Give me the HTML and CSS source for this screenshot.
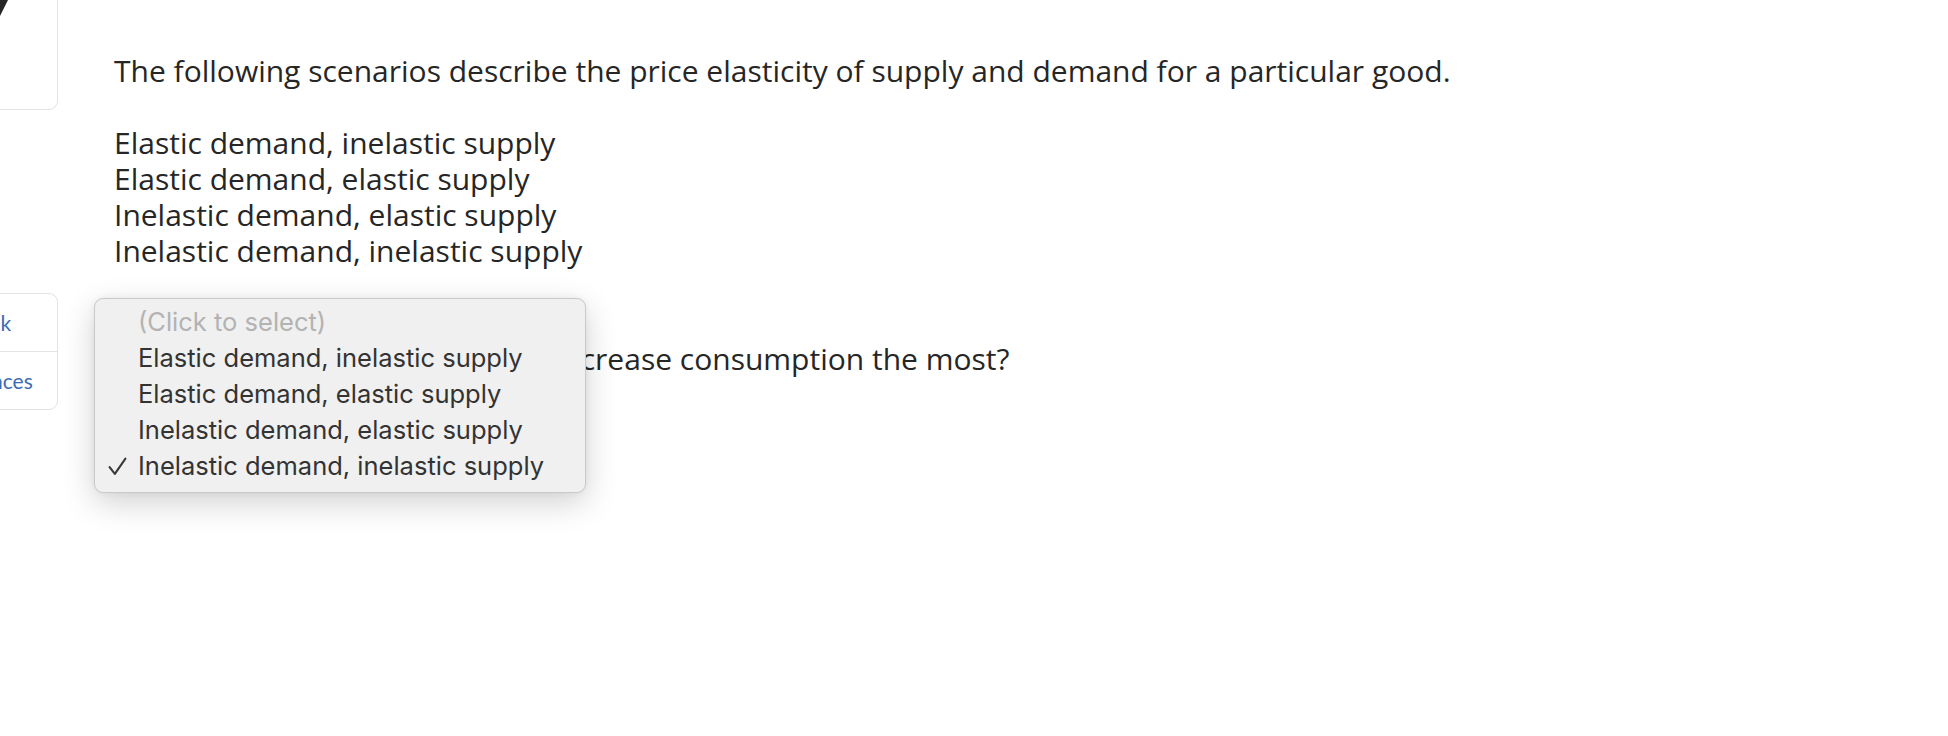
FILE: index.html
```html
<!DOCTYPE html>
<html lang="en">
<head>
<meta charset="utf-8">
<title>Price elasticity question</title>
<link rel="stylesheet" href="styles.css">
</head>
<body>
<div class="page">
  <aside class="sidebar">
    <div class="card card-top">
      <svg class="card-icon" width="60" height="60" viewBox="0 0 60 60"><path d="M2 58 L30 2" stroke="#262626" stroke-width="9" fill="none"/></svg>
    </div>
    <div class="card card-links">
      <a class="link" href="#">Ebook</a>
      <a class="link" href="#">References</a>
    </div>
  </aside>
  <main class="content">
    <p class="line">The following scenarios describe the price elasticity of supply and demand for a particular good.</p>
    <p class="line blank">&nbsp;</p>
    <p class="line">Elastic demand, inelastic supply</p>
    <p class="line">Elastic demand, elastic supply</p>
    <p class="line">Inelastic demand, elastic supply</p>
    <p class="line">Inelastic demand, inelastic supply</p>
    <p class="line blank">&nbsp;</p>
    <p class="line blank">&nbsp;</p>
    <p class="line"><span class="tight">Which of these scenarios would in</span>crease consumption the most?</p>
    <div class="select-row">
      <div class="select-box">Inelastic demand, inelastic supply</div>
      <ul class="popup">
        <li class="opt placeholder">(Click to select)</li>
        <li class="opt">Elastic demand, inelastic supply</li>
        <li class="opt">Elastic demand, elastic supply</li>
        <li class="opt">Inelastic demand, elastic supply</li>
        <li class="opt checked"><svg class="check" width="18" height="18" viewBox="0 0 18 18"><path d="M1.5 9.5 L6.5 16 L16.5 1.5" stroke="#3a3a3a" stroke-width="2" fill="none" stroke-linecap="round" stroke-linejoin="round"/></svg>Inelastic demand, inelastic supply</li>
      </ul>
    </div>
  </main>
</div>
</body>
</html>
```

FILE: styles.css
```css
html, body {
  margin: 0;
  padding: 0;
  background: #ffffff;
}
body {
  width: 1948px;
  height: 736px;
  overflow: hidden;
  font-family: "Open Sans", "Liberation Sans", sans-serif;
  color: #262626;
}
.page {
  display: flex;
  align-items: flex-start;
}
.sidebar {
  width: 58px;
  flex: none;
  display: flex;
  flex-direction: column;
  gap: 183px;
}
.card {
  border: 1px solid #e3e3e3;
  background: #fff;
  margin-left: -94px;
  width: 152px;
  box-sizing: border-box;
  overflow: hidden;
}
.card-top {
  height: 112px;
  margin-top: -2px;
  border-top: none;
  border-radius: 0 0 9px 0;
  position: relative;
}
.card-icon {
  position: absolute;
  left: 82px;
  top: -32px;
}
.card-links {
  border-radius: 0 9px 9px 0;
  display: flex;
  flex-direction: column;
  height: 117px;
}
.link {
  display: flex;
  align-items: center;
  justify-content: center;
  height: 58px;
  font-family: Lato, "Liberation Sans", sans-serif;
  font-size: 21px;
  color: #3b6cb4;
  text-decoration: none;
  white-space: nowrap;
}
.link + .link {
  border-top: 1px solid #e3e3e3;
}
.content {
  padding: 53px 0 0 56px;
  flex: 1;
}
.line {
  margin: 0;
  font-size: 30px;
  line-height: 36px;
  white-space: nowrap;
}
.tight {
  letter-spacing: -0.25px;
}
.select-row {
  position: relative;
  margin-top: 72px;
  height: 36px;
}
.select-box {
  font-size: 26px;
  line-height: 36px;
  color: transparent;
}
.popup {
  position: absolute;
  left: -20px;
  top: -151px;
  width: 492px;
  height: 195px;
  box-sizing: border-box;
  margin: 0;
  padding: 5px 0 0 0;
  list-style: none;
  background: #f0f0f0;
  border: 1px solid #c9c9c9;
  border-radius: 9px;
  box-shadow: 0 10px 32px rgba(0, 0, 0, 0.18), 0 0 6px rgba(0, 0, 0, 0.06);
  font-family: Inter, "Liberation Sans", sans-serif;
}
.opt {
  position: relative;
  padding-left: 43px;
  height: 36px;
  line-height: 36px;
  font-size: 25.5px;
  color: #333333;
  white-space: nowrap;
}
.placeholder {
  color: #b3b3b3;
}
.check {
  position: absolute;
  left: 13px;
  top: 9px;
  width: 19px;
  height: 19px;
}
```
